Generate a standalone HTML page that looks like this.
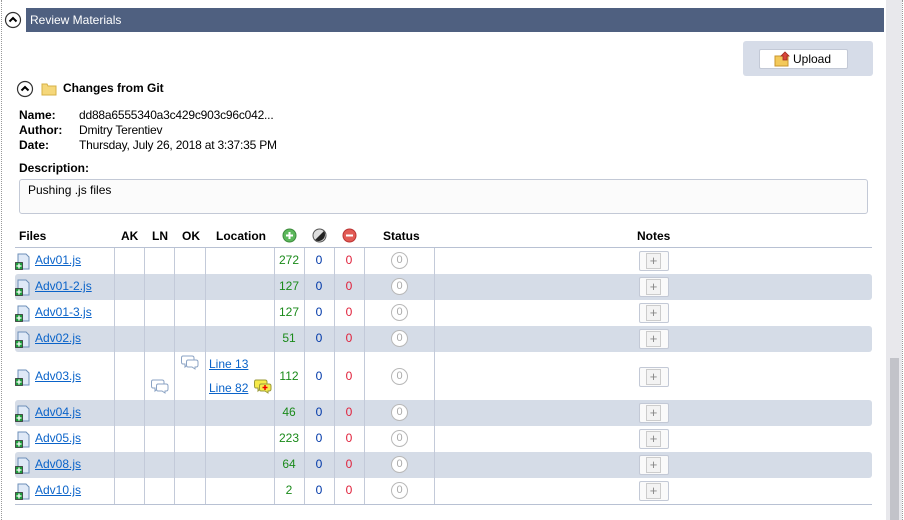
<!DOCTYPE html>
<html><head><meta charset="utf-8"><style>
body{margin:0;width:904px;height:520px;overflow:hidden;background:#fff;font-family:"Liberation Sans",sans-serif;font-size:12px;color:#000;position:relative}
.a{position:absolute}
.b{font-weight:bold}
a{color:#0a63c9;text-decoration:underline}
.row{position:absolute;left:15px;width:857px}
.g{background:#d5dce7;border-radius:3px}
.vl{position:absolute;top:248px;height:256px;width:1px;background:#c3cad9}
.num{position:absolute;width:30px;text-align:center}
.st{position:absolute;left:391px;width:17px;height:17px;border:1.5px solid #b8b8b8;border-radius:50%;box-sizing:border-box;font-size:11px;color:#aaa;text-align:center;line-height:14px;background:#fff}
.nb{position:absolute;left:639px;width:30px;height:20px;border:1px solid #c3c9d6;border-radius:2px;box-sizing:border-box;background:#fafafa}
.nb:after{content:"+";position:absolute;left:6px;top:1px;width:15px;height:16px;border:1px solid #ccc;box-sizing:border-box;font-size:13px;line-height:13px;text-align:center;color:#888;background:#f3f3f3}
.fi{position:absolute;left:15px;width:16px;height:17px}
</style></head><body>
<div class="a" style="left:1px;top:0;width:0;height:520px;border-left:1px dotted #999"></div>
<div class="a" style="left:902px;top:0;width:0;height:520px;border-left:1px dotted #999"></div>
<div class="a" style="left:886px;top:0;width:16px;height:520px;background:#e8e8ec"></div>
<div class="a" style="left:890px;top:358px;width:9px;height:162px;background:#c2c3c9"></div>

<svg class="a" style="left:4px;top:11px" width="18" height="18"><circle cx="9" cy="9" r="7.5" fill="#fff" stroke="#333" stroke-width="1.2"/><path d="M5.5 10.5 L9 7 L12.5 10.5" fill="none" stroke="#000" stroke-width="2"/></svg>
<div class="a" style="left:26px;top:8px;width:858px;height:24px;background:#4f6080;color:#fff;line-height:24px;padding-left:4px;box-sizing:border-box">Review Materials</div>

<div class="a" style="left:743px;top:41px;width:130px;height:35px;background:#d6dce8;border-radius:3px"></div>
<div class="a" style="left:759px;top:49px;width:89px;height:20px;background:#fff;border:1px solid #c3c9d6;border-radius:2px;box-sizing:border-box;line-height:18px;padding-left:33px">Upload</div>
<svg class="a" style="left:774px;top:51px" width="18" height="16"><rect x="1" y="5" width="13" height="10" fill="#f3c95a" stroke="#c9962c"/><path d="M9 9 V5 H7 L11 1 L15 5 H13 V9Z" fill="#d9453a" stroke="#a12a22" stroke-width=".8"/></svg>

<svg class="a" style="left:16px;top:80px" width="18" height="18"><circle cx="9" cy="9" r="7.5" fill="#fff" stroke="#333" stroke-width="1.2"/><path d="M5.5 10.5 L9 7 L12.5 10.5" fill="none" stroke="#000" stroke-width="2"/></svg>
<svg class="a" style="left:41px;top:82px" width="16" height="14"><path d="M1 2 H6 L7 4 H15 V13 H1Z" fill="#f5d77a" stroke="#d6b045"/></svg>
<div class="a b" style="left:63px;top:81px">Changes from Git</div>

<div class="a b" style="left:19px;top:108px;line-height:15px">Name:<br>Author:<br>Date:</div>
<div class="a" style="left:79px;top:108px;line-height:15px;letter-spacing:-0.2px">dd88a6555340a3c429c903c96c042...<br>Dmitry Terentiev<br>Thursday, July 26, 2018 at 3:37:35 PM</div>
<div class="a b" style="left:19px;top:161px">Description:</div>
<div class="a" style="left:19px;top:179px;width:849px;height:35px;border:1px solid #c3c9d6;border-radius:3px;box-sizing:border-box;background:#fbfbfb;padding:3px 8px">Pushing .js files</div>

<div class="a b" style="left:19px;top:229px">Files</div>
<div class="a b" style="left:121px;top:229px">AK</div>
<div class="a b" style="left:152px;top:229px">LN</div>
<div class="a b" style="left:182px;top:229px">OK</div>
<div class="a b" style="left:216px;top:229px">Location</div>
<svg class="a" style="left:282px;top:228px" width="15" height="15"><circle cx="7.5" cy="7.5" r="6.5" fill="#5cb85c" stroke="#3d8b3d"/><path d="M4 7.5H11M7.5 4V11" stroke="#fff" stroke-width="2"/></svg>
<svg class="a" style="left:312px;top:228px" width="15" height="15"><circle cx="7.5" cy="7.5" r="6.5" fill="#ddd" stroke="#555"/><path d="M12 3 A6.5 6.5 0 0 1 3 12Z" fill="#222"/></svg>
<svg class="a" style="left:342px;top:228px" width="15" height="15"><circle cx="7.5" cy="7.5" r="6.5" fill="#e25b55" stroke="#b33"/><path d="M4 7.5H11" stroke="#fff" stroke-width="2"/></svg>
<div class="a b" style="left:383px;top:229px">Status</div>
<div class="a b" style="left:637px;top:229px">Notes</div>
<div class="a" style="left:15px;top:247px;width:857px;height:1px;background:#b8c1d3"></div>

<div class="row g" style="top:274px;height:26px"></div>
<div class="row g" style="top:326px;height:26px"></div>
<div class="row g" style="top:400px;height:26px"></div>
<div class="row g" style="top:452px;height:26px"></div>
<div class="a" style="left:15px;top:504px;width:857px;height:1px;background:#b8c1d3"></div>

<div class="vl" style="left:114px"></div><div class="vl" style="left:144px"></div><div class="vl" style="left:174px"></div><div class="vl" style="left:205px"></div><div class="vl" style="left:274px"></div><div class="vl" style="left:304px"></div><div class="vl" style="left:334px"></div><div class="vl" style="left:364px"></div><div class="vl" style="left:434px"></div>

<svg width="0" height="0" style="position:absolute"><defs><g id="f"><path d="M3 1H11L14 4V16H3Z" fill="#dfe9f7" stroke="#6e8fb8"/><rect x="0.5" y="9.5" width="7" height="7" fill="#1e9e3c" stroke="#333" stroke-width=".8"/><path d="M4 10.5V15.5M1.5 13H6.5" stroke="#fff" stroke-width="1.3"/></g>
<g id="c"><path d="M2 1H11Q13 1 13 3V7Q13 9 11 9H7L4 12V9H2Q0.5 9 0.5 7V3Q0.5 1 2 1Z" fill="#fff" stroke="#8ba3c4"/><path d="M7 5H15Q17 5 17 7V10Q17 12 15 12H14V14L11 12H7Q5.5 12 5.5 10V7Q5.5 5 7 5Z" fill="#fff" stroke="#8ba3c4"/></g></defs></svg>

<svg class="fi" style="top:253px"><use href="#f"/></svg><a class="a" style="left:35px;top:253px">Adv01.js</a><div class="num" style="left:274px;top:253px;color:#1a8a1a">272</div><div class="num" style="left:304px;top:253px;color:#0038a8">0</div><div class="num" style="left:334px;top:253px;color:#e0203a">0</div><div class="st" style="top:252px">0</div><div class="nb" style="top:251px"></div>
<svg class="fi" style="top:279px"><use href="#f"/></svg><a class="a" style="left:35px;top:279px">Adv01-2.js</a><div class="num" style="left:274px;top:279px;color:#1a8a1a">127</div><div class="num" style="left:304px;top:279px;color:#0038a8">0</div><div class="num" style="left:334px;top:279px;color:#e0203a">0</div><div class="st" style="top:278px">0</div><div class="nb" style="top:277px"></div>
<svg class="fi" style="top:305px"><use href="#f"/></svg><a class="a" style="left:35px;top:305px">Adv01-3.js</a><div class="num" style="left:274px;top:305px;color:#1a8a1a">127</div><div class="num" style="left:304px;top:305px;color:#0038a8">0</div><div class="num" style="left:334px;top:305px;color:#e0203a">0</div><div class="st" style="top:304px">0</div><div class="nb" style="top:303px"></div>
<svg class="fi" style="top:331px"><use href="#f"/></svg><a class="a" style="left:35px;top:331px">Adv02.js</a><div class="num" style="left:274px;top:331px;color:#1a8a1a">51</div><div class="num" style="left:304px;top:331px;color:#0038a8">0</div><div class="num" style="left:334px;top:331px;color:#e0203a">0</div><div class="st" style="top:330px">0</div><div class="nb" style="top:329px"></div>
<svg class="fi" style="top:369px"><use href="#f"/></svg><a class="a" style="left:35px;top:369px">Adv03.js</a><div class="num" style="left:274px;top:369px;color:#1a8a1a">112</div><div class="num" style="left:304px;top:369px;color:#0038a8">0</div><div class="num" style="left:334px;top:369px;color:#e0203a">0</div><div class="st" style="top:368px">0</div><div class="nb" style="top:367px"></div>
<svg class="a" style="left:151px;top:379px" width="18" height="15"><use href="#c"/></svg>
<svg class="a" style="left:181px;top:355px" width="18" height="15"><use href="#c"/></svg>
<a class="a" style="left:209px;top:357px">Line 13</a><a class="a" style="left:209px;top:381px">Line 82</a>
<svg class="a" style="left:254px;top:379px" width="18" height="15"><path d="M2 1H11Q13 1 13 3V7Q13 9 11 9H7L4 12V9H2Q0.5 9 0.5 7V3Q0.5 1 2 1Z" fill="#f6ea4a" stroke="#9a9a3a"/><path d="M7 5H15Q17 5 17 7V10Q17 12 15 12H14V14L11 12H7Q5.5 12 5.5 10V7Q5.5 5 7 5Z" fill="#f6ea4a" stroke="#9a9a3a"/><path d="M11 6V11M8.5 8.5H13.5" stroke="#e00" stroke-width="1.5"/></svg>
<svg class="fi" style="top:405px"><use href="#f"/></svg><a class="a" style="left:35px;top:405px">Adv04.js</a><div class="num" style="left:274px;top:405px;color:#1a8a1a">46</div><div class="num" style="left:304px;top:405px;color:#0038a8">0</div><div class="num" style="left:334px;top:405px;color:#e0203a">0</div><div class="st" style="top:404px">0</div><div class="nb" style="top:403px"></div>
<svg class="fi" style="top:431px"><use href="#f"/></svg><a class="a" style="left:35px;top:431px">Adv05.js</a><div class="num" style="left:274px;top:431px;color:#1a8a1a">223</div><div class="num" style="left:304px;top:431px;color:#0038a8">0</div><div class="num" style="left:334px;top:431px;color:#e0203a">0</div><div class="st" style="top:430px">0</div><div class="nb" style="top:429px"></div>
<svg class="fi" style="top:457px"><use href="#f"/></svg><a class="a" style="left:35px;top:457px">Adv08.js</a><div class="num" style="left:274px;top:457px;color:#1a8a1a">64</div><div class="num" style="left:304px;top:457px;color:#0038a8">0</div><div class="num" style="left:334px;top:457px;color:#e0203a">0</div><div class="st" style="top:456px">0</div><div class="nb" style="top:455px"></div>
<svg class="fi" style="top:483px"><use href="#f"/></svg><a class="a" style="left:35px;top:483px">Adv10.js</a><div class="num" style="left:274px;top:483px;color:#1a8a1a">2</div><div class="num" style="left:304px;top:483px;color:#0038a8">0</div><div class="num" style="left:334px;top:483px;color:#e0203a">0</div><div class="st" style="top:482px">0</div><div class="nb" style="top:481px"></div>
</body></html>
